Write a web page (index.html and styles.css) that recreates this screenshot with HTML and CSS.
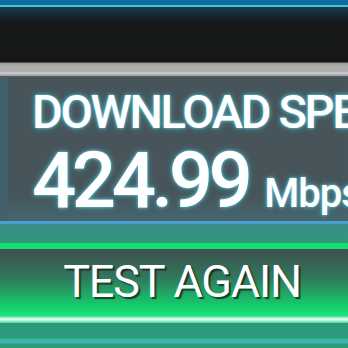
FILE: index.html
```html
<!DOCTYPE html>
<html>
<head>
<meta charset="utf-8">
<link rel="stylesheet" href="styles.css">
</head>
<body>
<div class="screen">
  <div class="topbar"></div>
  <div class="header"></div>
  <div class="rail"></div>
  <div class="panel">
    <div class="strip"></div>
    <div class="readout">
      <div class="label">DOWNLOAD SPEED</div>
      <div class="value"><span class="num">424.99</span><span class="unit">Mbps</span></div>
    </div>
  </div>
  <div class="sep"></div>
  <div class="btnwrap">
    <div class="btn">TEST AGAIN</div>
  </div>
  <div class="footer"></div>
</div>
</body>
</html>
```
FILE: styles.css
```css
html, body {
  margin: 0;
  padding: 0;
  background: #2e9a7c;
}
.screen {
  width: 348px;
  height: 348px;
  overflow: hidden;
  display: flex;
  flex-direction: column;
  font-family: Roboto, "DejaVu Sans", sans-serif;
}
.topbar {
  height: 5px;
  flex: none;
  background: #0d6da2;
  border-bottom: 2px solid #3fc9cf;
}
.header {
  height: 55px;
  flex: none;
  background: linear-gradient(#173a55 0px, #171a1c 14px, #161717 100%);
}
.rail {
  height: 13px;
  flex: none;
  border-top: 1px solid #4e4e4e;
  border-bottom: 1px solid #5a5c5c;
  background: linear-gradient(#9a9a9a 0, #adadad 3px, #b0b0b0 9px, #dcdcdc 10px, #b8b8b8 11px, #9c9c9c 13px);
}
.panel {
  height: 144px;
  flex: none;
  display: flex;
  background: #47555b;
  box-shadow: inset 0 -24px 22px -14px rgba(70,150,170,0.35);
}
.strip {
  width: 8px;
  flex: none;
  background: #406169;
}
.readout {
  padding: 9px 0 0 24px;
  color: #fff;
  white-space: nowrap;
  font-weight: 500;
  text-shadow: 0 0 3px rgba(90,220,240,0.9), 0 0 6px rgba(90,220,240,0.5);
}
.label {
  font-size: 47px;
  line-height: 52px;
  letter-spacing: -2.3px;
}
.value {
  margin-top: 4px;
  line-height: 78px;
}
.num {
  font-size: 78px;
  letter-spacing: -4.5px;
}
.unit {
  font-size: 40px;
  letter-spacing: -1px;
  margin-left: 16px;
}
.sep {
  height: 19px;
  flex: none;
  border-top: 3px solid #4a9fd1;
  background: linear-gradient(#3d8a8c, #2f9a78);
}
.btnwrap {
  flex: none;
  border-top: 6px solid #12e06f;
}
.btn {
  height: 74px;
  padding: 0 0 10px 16px;
  box-sizing: border-box;
  display: flex;
  align-items: center;
  justify-content: center;
  color: #fff;
  font-size: 45px;
  letter-spacing: -1.2px;
  background: linear-gradient(#3f4e4f 0%, #2f7a5c 40%, #14d36e 80%, #20e07e 90%, #f0fff6 95%, #3fd89a 100%);
  text-shadow: 2px 2px 1px rgba(20,40,30,0.8);
}
.footer {
  flex: 1;
  background: linear-gradient(#2e9a7c 0, #2e9a7c 15px, #3ab6ae 16px, #3ab6ae 20px, #2e9a7c 21px);
}
```
